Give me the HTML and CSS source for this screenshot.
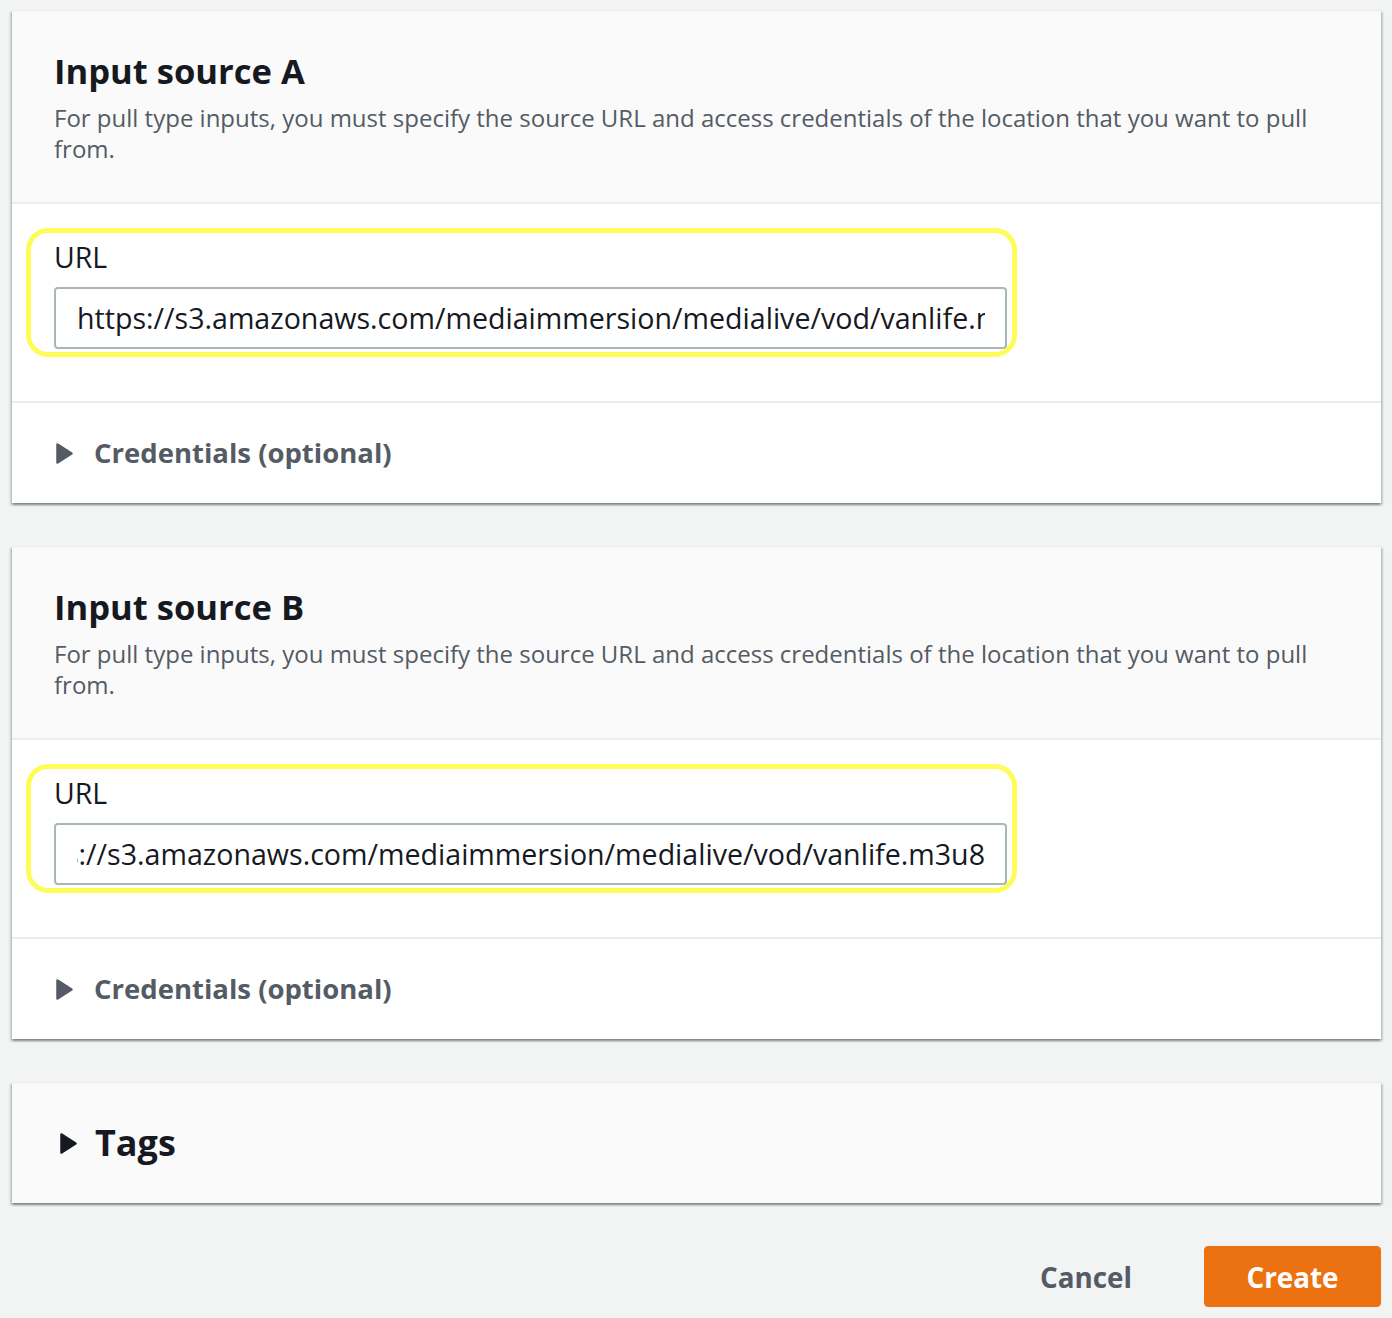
FILE: index.html
```html
<!DOCTYPE html>
<html lang="en">
<head>
<meta charset="utf-8">
<title>Create input</title>
<link rel="stylesheet" href="styles.css">
</head>
<body>
<main class="page">
  <section class="card">
    <header class="card-header">
      <h2 class="card-title">Input source A</h2>
      <p class="card-desc">For pull type inputs, you must specify the source URL and access credentials of the location that you want to pull from.</p>
    </header>
    <div class="card-body">
      <div class="highlight">
        <label class="field-label">URL</label>
        <div class="field-input" role="textbox">
          <div class="field-clip"><span class="field-value">https://s3.amazonaws.com/mediaimmersion/medialive/vod/vanlife.m3u8</span></div>
        </div>
      </div>
    </div>
    <div class="expander">
      <svg class="caret caret-sub" viewBox="0 0 17 21" aria-hidden="true"><polygon points="1.5,1.5 15.5,10.5 1.5,19.5"/></svg>
      <span class="expander-text">Credentials (optional)</span>
    </div>
  </section>

  <section class="card">
    <header class="card-header">
      <h2 class="card-title">Input source B</h2>
      <p class="card-desc">For pull type inputs, you must specify the source URL and access credentials of the location that you want to pull from.</p>
    </header>
    <div class="card-body">
      <div class="highlight">
        <label class="field-label">URL</label>
        <div class="field-input" role="textbox">
          <div class="field-clip field-clip-end"><span class="field-value">https://s3.amazonaws.com/mediaimmersion/medialive/vod/vanlife.m3u8</span></div>
        </div>
      </div>
    </div>
    <div class="expander">
      <svg class="caret caret-sub" viewBox="0 0 17 21" aria-hidden="true"><polygon points="1.5,1.5 15.5,10.5 1.5,19.5"/></svg>
      <span class="expander-text">Credentials (optional)</span>
    </div>
  </section>

  <section class="card card-tags">
    <div class="tags-row">
      <svg class="caret caret-main" viewBox="0 0 17 21" aria-hidden="true"><polygon points="1.5,1.5 15.5,10.5 1.5,19.5"/></svg>
      <span class="tags-text">Tags</span>
    </div>
  </section>

  <div class="actions">
    <button class="btn btn-link" type="button">Cancel</button>
    <button class="btn btn-primary" type="button">Create</button>
  </div>
</main>
</body>
</html>
```

FILE: styles.css
```css
* { box-sizing: border-box; }

html, body {
  margin: 0;
  padding: 0;
  background: #f2f3f3;
}

body {
  font-family: "Open Sans", "Noto Sans", "Liberation Sans", sans-serif;
  color: #16191f;
}

.page {
  padding: 10px 11px 0 12px;
  display: flex;
  flex-direction: column;
}

.card {
  background: #ffffff;
  border-top: 1px solid #eaeded;
  box-shadow: 0 2px 2px 0 rgba(0, 28, 36, 0.3),
              2px 2px 2px 0 rgba(0, 28, 36, 0.15),
              -2px 2px 2px 0 rgba(0, 28, 36, 0.15);
  margin-bottom: 43px;
}

.card-header {
  background: #fafafa;
  padding: 38px 42px 38px 42px;
  border-bottom: 2px solid #eaeded;
}

.card-title {
  margin: 0;
  font-size: 34.6px;
  line-height: 44px;
  font-weight: 700;
  color: #16191f;
}

.card-desc {
  margin: 9px 0 0 0;
  font-size: 24px;
  line-height: 31px;
  color: #545b64;
}

.card-body {
  padding: 24px 0 44px 14px;
  border-bottom: 2px solid #eaeded;
}

.highlight {
  width: 991px;
  border: 5px solid #fdfc58;
  border-radius: 22px;
  padding: 7px 5px 3px 23px;
  display: flex;
  flex-direction: column;
}

.field-label {
  font-size: 28.5px;
  line-height: 34px;
  color: #16191f;
}

.field-input {
  margin-top: 13px;
  height: 62px;
  border: 2px solid #aab7b8;
  border-radius: 4px;
  background: #ffffff;
  padding: 0 20px 0 21px;
  display: flex;
  align-items: center;
}

.field-clip {
  flex: 1;
  min-width: 0;
  display: flex;
  overflow: hidden;
}

.field-clip-end {
  justify-content: flex-end;
}

.field-value {
  flex-shrink: 0;
  white-space: nowrap;
  font-size: 28.6px;
  line-height: 36px;
  color: #16191f;
}

.expander {
  height: 100px;
  padding: 0 44px;
  display: flex;
  align-items: center;
  gap: 21px;
}

.caret {
  width: 17px;
  height: 21px;
  flex-shrink: 0;
}

.caret polygon {
  stroke-width: 2.5;
  stroke-linejoin: round;
}

.caret-sub polygon { fill: #545b64; stroke: #545b64; }
.caret-main polygon { fill: #16191f; stroke: #16191f; }

.expander-text {
  font-size: 27.5px;
  line-height: 34px;
  font-weight: 700;
  color: #545b64;
}

.card-tags {
  background: #fafafa;
}

.tags-row {
  height: 120px;
  padding: 0 48px;
  display: flex;
  align-items: center;
  gap: 18px;
}

.tags-text {
  font-size: 36px;
  line-height: 44px;
  font-weight: 700;
  color: #16191f;
}

.actions {
  display: flex;
  justify-content: flex-end;
  align-items: center;
  gap: 32px;
}

.btn {
  font-family: inherit;
  font-size: 27.8px;
  font-weight: 700;
  height: 61px;
  border-radius: 4px;
  cursor: pointer;
}

.btn-link {
  background: transparent;
  border: none;
  color: #545b64;
  padding: 0 40px;
}

.btn-primary {
  width: 177px;
  background: #ec7211;
  border: 1px solid #ec7211;
  color: #ffffff;
  padding: 0;
}
```
